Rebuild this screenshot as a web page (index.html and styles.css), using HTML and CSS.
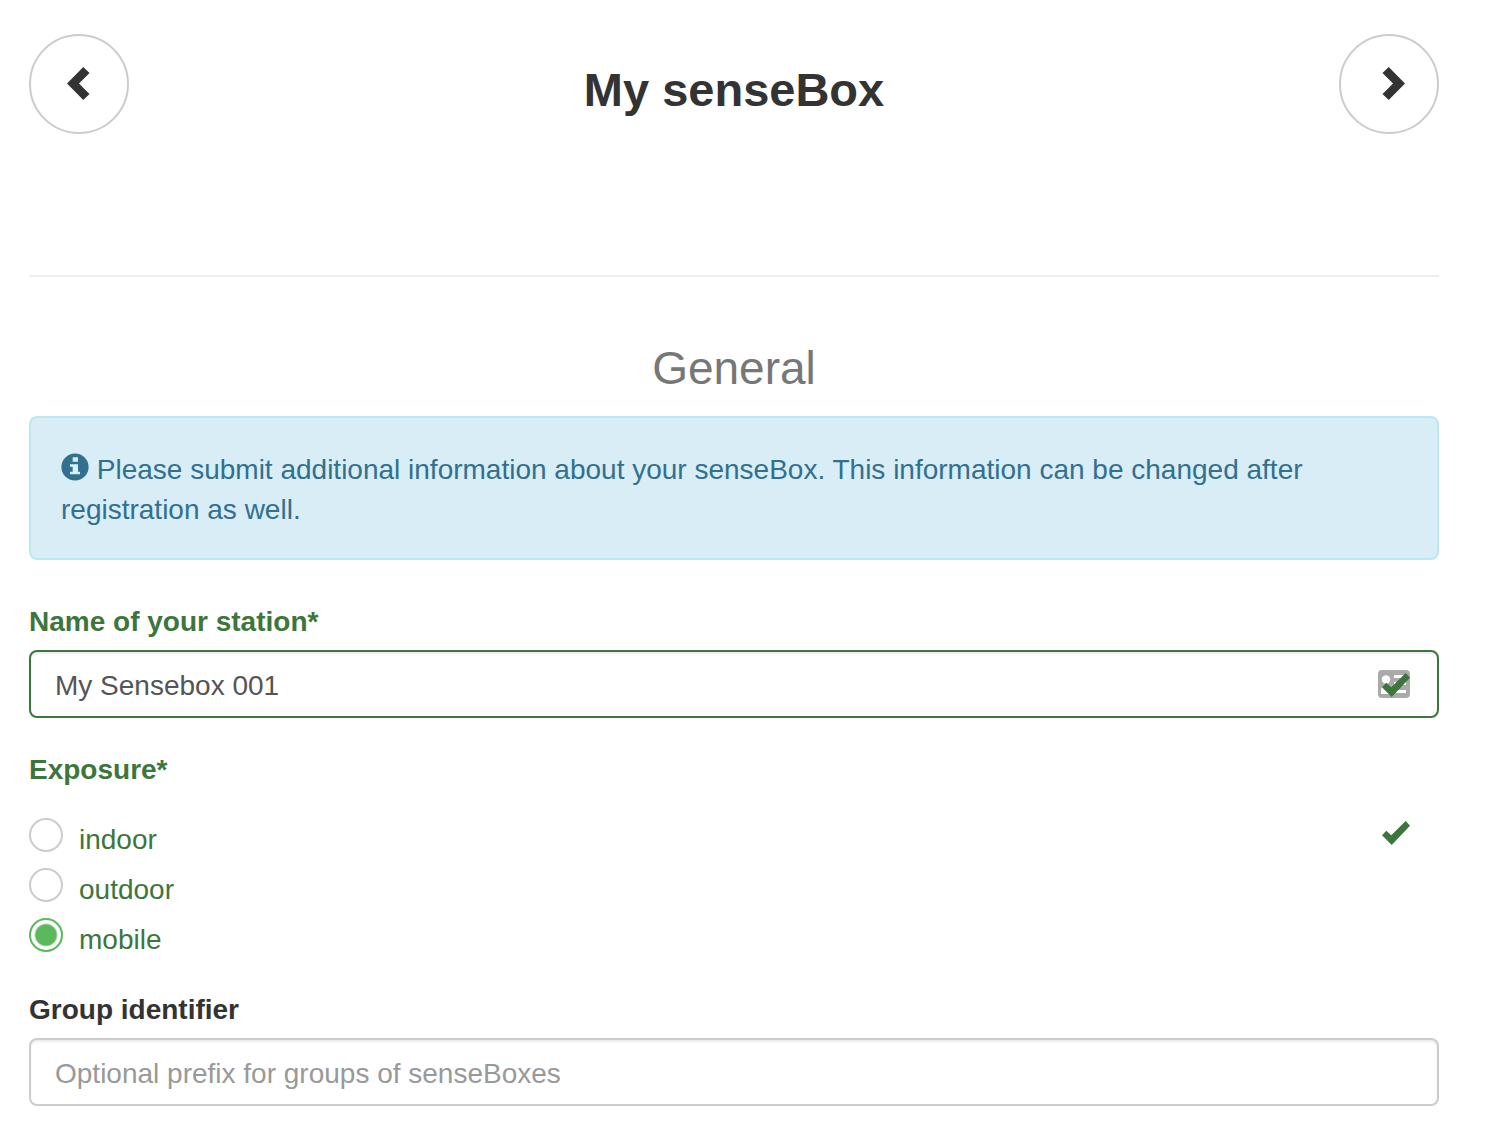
FILE: index.html
```html
<!DOCTYPE html>
<html lang="en">
<head>
<meta charset="utf-8">
<meta name="viewport" content="width=device-width, initial-scale=1">
<title>My senseBox</title>
<link rel="stylesheet" href="styles.css">
</head>
<body>
<main class="page">
  <header class="wizard-header">
    <button class="nav-button" type="button" aria-label="Previous">
      <svg viewBox="0 0 40 40" aria-hidden="true"><path d="M8 19.5 24.3 3 30.5 9 20 19.5 30.5 30 24.3 36z"/></svg>
    </button>
    <h1 class="title">My senseBox</h1>
    <button class="nav-button" type="button" aria-label="Next">
      <svg viewBox="0 0 40 40" aria-hidden="true"><path d="M36 19.5 19.7 3 13.5 9 24 19.5 13.5 30 19.7 36z"/></svg>
    </button>
  </header>
  <form class="form">
    <h2 class="section-title">General</h2>
    <p class="alert"><svg class="info-icon" viewBox="0 0 28 28" aria-hidden="true"><circle cx="14" cy="14" r="13.6"/><path class="info-mark" d="M11.7 4.3h5.300v4.400h-5.300zM9 11.300h8v7.500h2v2.500H9v-2.500h2.700v-5H9z"/></svg> Please submit additional information about your senseBox. This information can be changed after registration as well.</p>

    <div class="group success">
      <label class="label" for="station-name">Name of your station*</label>
      <div class="field">
        <input class="control" id="station-name" type="text" value="My Sensebox 001">
        <svg class="card-icon" viewBox="0 0 32 28" aria-hidden="true"><rect width="32" height="28" rx="4"/><g class="card-detail"><circle cx="8" cy="9.500" r="4.200"/><path d="M3 24v-4q0-4 5-4t5 4v4zM16 5h12v3H16zM16 12h12v3H16zM18 20h10v3H18z"/></g></svg>
        <svg class="check" viewBox="0 0 28 24" aria-hidden="true"><path d="M0 14.300 4.300 9.700 9.300 14.300 23.700 0 28 4.800 9.700 24z"/></svg>
      </div>
    </div>

    <fieldset class="group success">
      <legend class="label">Exposure*</legend>
      <div class="field choices">
        <label class="choice"><input class="radio" type="radio" name="exposure">indoor</label>
        <label class="choice"><input class="radio" type="radio" name="exposure">outdoor</label>
        <label class="choice"><input class="radio" type="radio" name="exposure" checked>mobile</label>
        <svg class="check" viewBox="0 0 28 24" aria-hidden="true"><path d="M0 14.300 4.300 9.700 9.300 14.300 23.700 0 28 4.800 9.700 24z"/></svg>
      </div>
    </fieldset>

    <div class="group">
      <label class="label" for="group-id">Group identifier</label>
      <div class="field">
        <input class="control" id="group-id" type="text" placeholder="Optional prefix for groups of senseBoxes">
      </div>
    </div>
  </form>
</main>
</body>
</html>
```
FILE: styles.css
```css
* {
  box-sizing: border-box;
}

body {
  margin: 0;
  background: #fff;
  color: #333;
  font: 28px/40px "Helvetica Neue", Helvetica, "Liberation Sans", Arial, sans-serif;
}

.page {
  padding: 34px 51px 28px 29px;
}

.wizard-header {
  display: flex;
  justify-content: space-between;
  padding-bottom: 141px;
  border-bottom: 2px solid #eee;
}

.nav-button {
  display: flex;
  align-items: center;
  justify-content: center;
  width: 100px;
  height: 100px;
  padding: 0;
  border: 2px solid #ccc;
  border-radius: 50%;
  background: #fff;
  color: #333;
}

.nav-button svg {
  width: 40px;
  height: 40px;
  fill: currentColor;
}

.title {
  margin: 30px 0 0;
  font-size: 47px;
  line-height: 52px;
  font-weight: bold;
}

.section-title {
  margin: 64px 0 20px;
  color: #777;
  font-size: 46px;
  line-height: 55px;
  font-weight: normal;
  text-align: center;
}

.alert {
  margin: 0 0 40px;
  padding: 32px 30px 28px;
  border: 2px solid #bce8f1;
  border-radius: 8px;
  background: #d9edf7;
  color: #31708f;
}

.info-icon {
  width: 28px;
  height: 28px;
  vertical-align: -2px;
  fill: #31708f;
}

.info-mark {
  fill: #d9edf7;
}

.group {
  min-width: 0;
  margin: 0 0 30px;
  padding: 0;
  border: 0;
}

.group:last-child {
  margin-bottom: 0;
}

.label {
  display: block;
  margin-bottom: 8px;
  padding: 2px 0 0;
  font-weight: bold;
}

.success {
  color: #3c763d;
}

.field {
  position: relative;
}

.control {
  display: block;
  width: 100%;
  height: 68px;
  padding: 14px 24px 10px;
  border: 2px solid #ccc;
  border-radius: 8px;
  background: #fff;
  box-shadow: inset 0 2px 2px rgba(0, 0, 0, 0.075);
  color: #555;
  font: inherit;
}

.control::placeholder {
  color: #999;
  opacity: 1;
}

.success .control {
  border-color: #3c763d;
}

.card-icon {
  position: absolute;
  top: 20px;
  right: 29px;
  width: 32px;
  height: 28px;
  fill: #aaa;
}

.card-detail {
  fill: #fff;
}

.check {
  position: absolute;
  top: 23px;
  right: 29px;
  width: 28px;
  height: 24px;
  fill: #3c763d;
}

.choices {
  display: flex;
  flex-direction: column;
  align-items: flex-start;
  gap: 6px;
  margin-bottom: -4px;
  padding-top: 20px;
}

.choice {
  display: flex;
  gap: 16px;
  line-height: 44px;
}

.radio {
  appearance: none;
  width: 34px;
  height: 34px;
  margin: 0;
  border: 2px solid #ccc;
  border-radius: 50%;
  background: #fff;
}

.radio:checked {
  border-color: #5cb85c;
  background: radial-gradient(circle, #5cb85c 10px, #fff 12px);
}
```
